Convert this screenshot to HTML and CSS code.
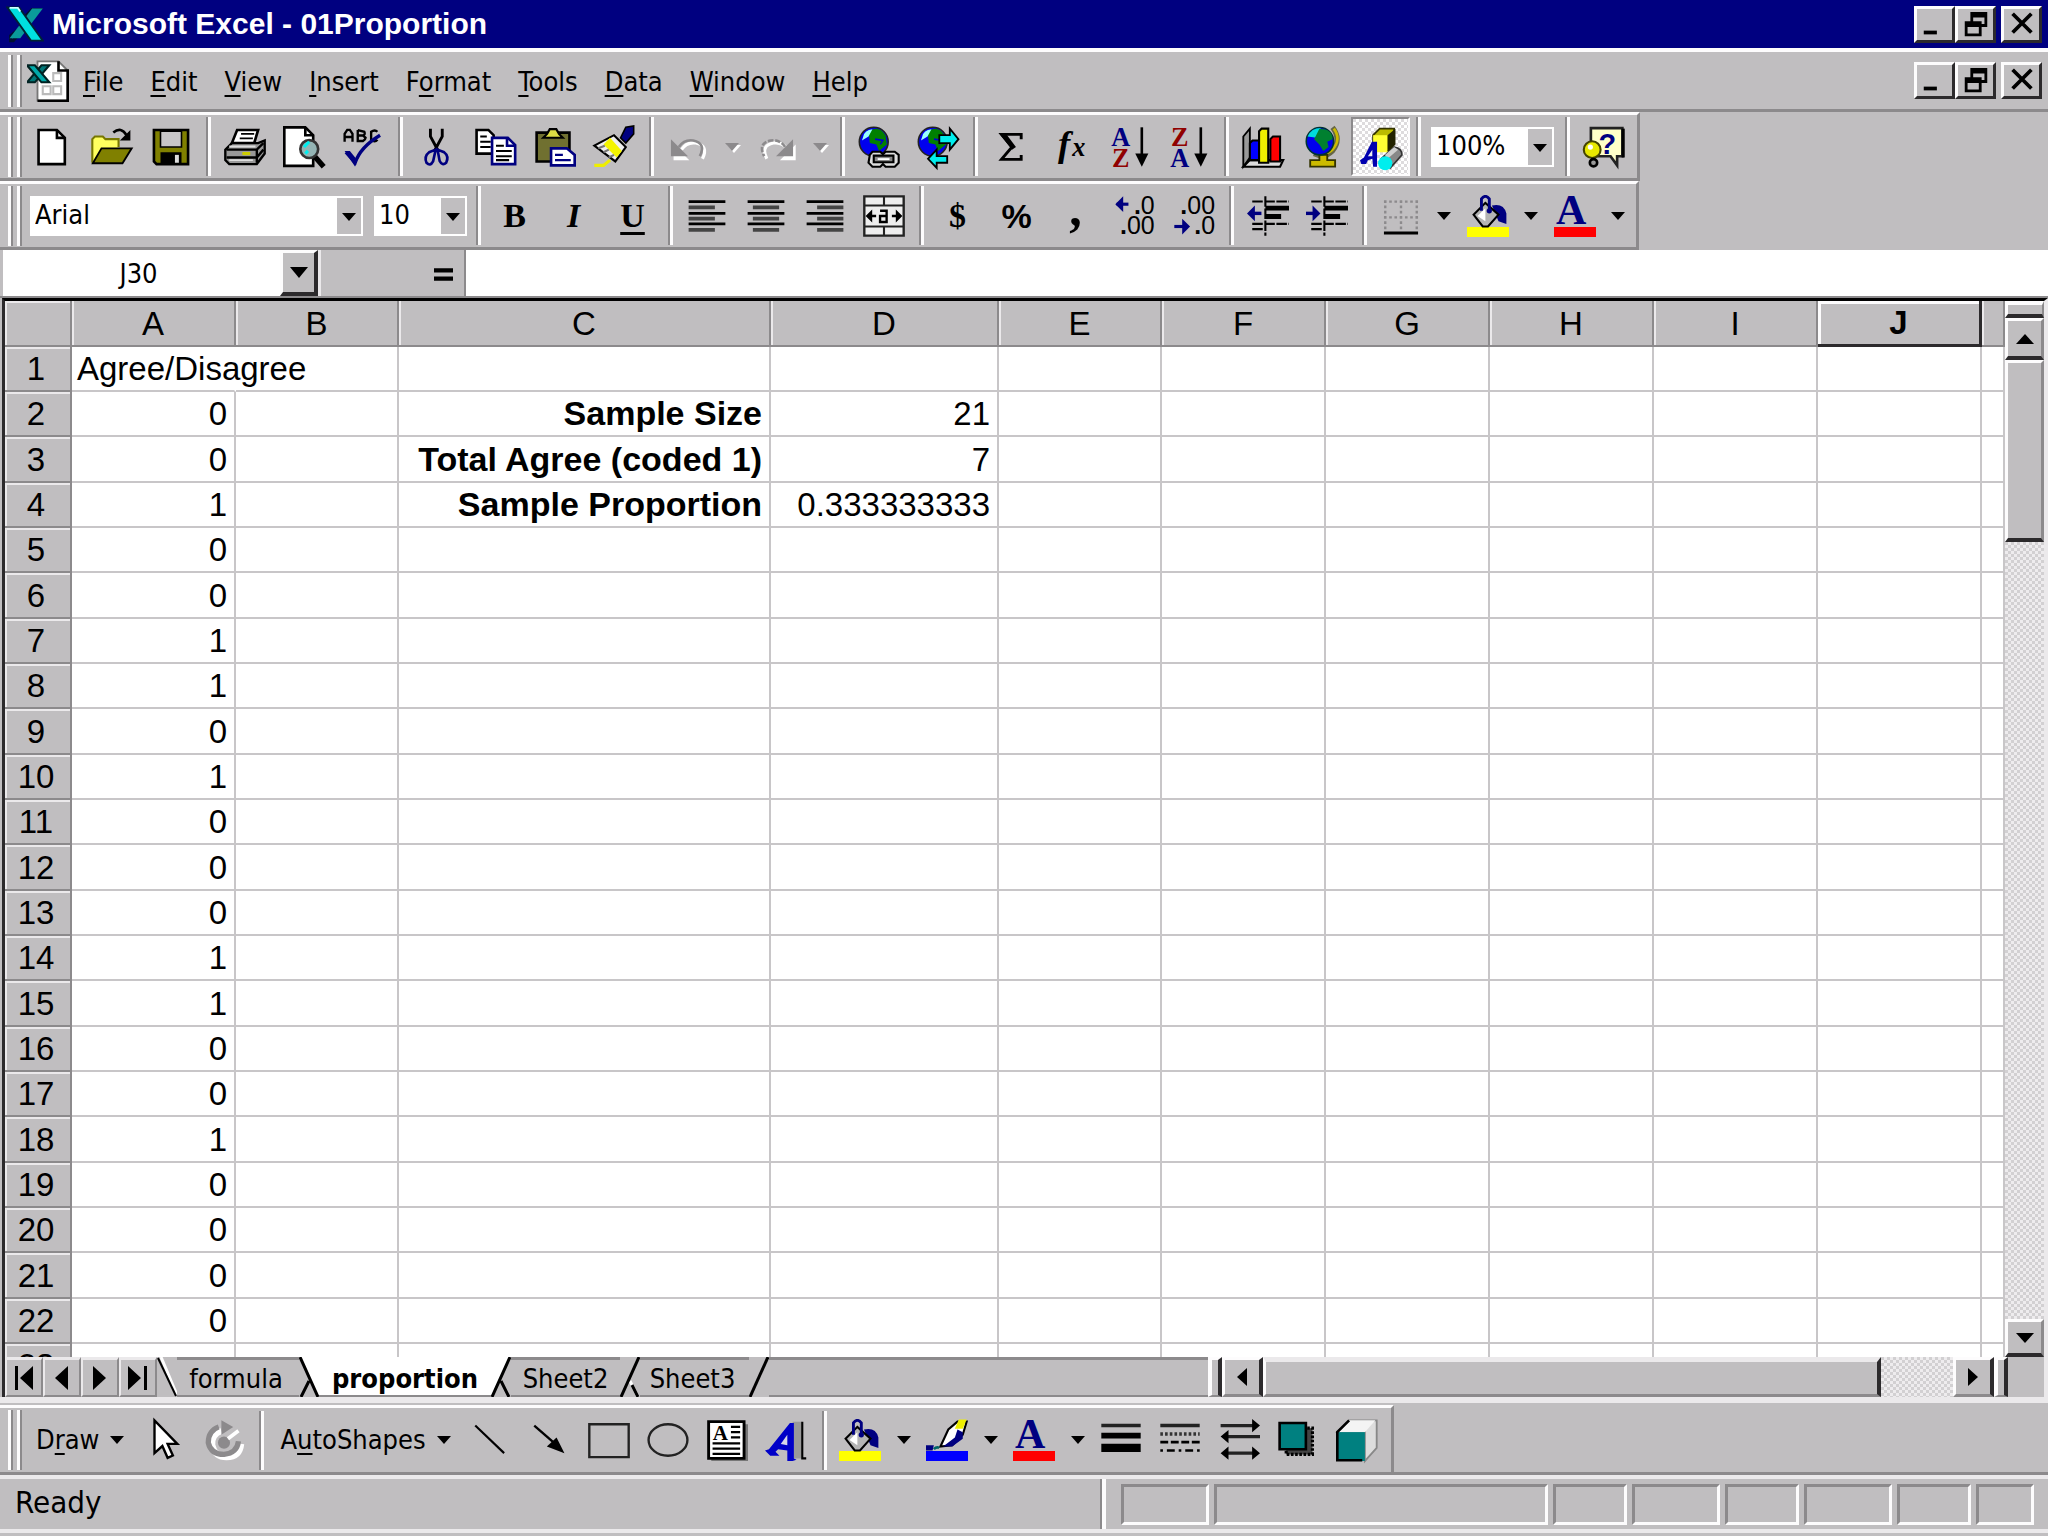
FILE: index.html
```html
<!DOCTYPE html>
<html lang="en">
<head>
<meta charset="utf-8">
<title>Microsoft Excel - 01Proportion</title>
<link rel="stylesheet" href="styles.css">
</head>
<body>
<svg class="defs" aria-hidden="true">
  <symbol id="i-min" viewBox="0 0 16 16"><path d="M2 11h7v2H2z"/></symbol>
  <symbol id="i-restore" viewBox="0 0 16 16"><path d="M5 1h9v8h-3V7.500h1.500V4h-6v2H5zM2 6h9v8H2zM3.500 9v3.500h6V9z" fill-rule="evenodd"/></symbol>
  <symbol id="i-close" viewBox="0 0 16 16"><path d="M3 2l10 10M13 2L3 12" fill="none" stroke="#000" stroke-width="2"/></symbol>
  <symbol id="i-bucket" viewBox="0 0 16 16">
    <path d="M0 12.200h16V16H0z" fill="var(--swatch)"/>
    <path d="M9.500 4q4.500-1 5.500 3v4l-3-1z" fill="#000080"/>
    <path d="M2.500 7.500L7 3l5 4.500L8 12H6z" fill="#b4b4b4" stroke="#000" stroke-width=".8"/>
    <path d="M4 8l3-3v5z" fill="#fff"/>
    <path d="M5.500 6V1.500Q7-.5 8.500 1.500V6" fill="none" stroke="#000080" stroke-width="1.100"/>
    <circle cx="8.500" cy="6" r="1" fill="#000080"/>
  </symbol>
  <symbol id="i-globe" viewBox="0 0 16 16">
    <circle cx="6" cy="6" r="5.500" fill="#0000ee" stroke="#222" stroke-width=".6"/>
    <path d="M4 2Q8-.5 10.500 3.500L11 7 8 9.500 7 7 4.500 6.500z" fill="#008000"/>
    <path d="M2 4Q2.500 1.500 5.500 1.200L4 4 1.500 5.500z" fill="#9ff"/>
    <path d="M6.500 5l3 .5-1 1.500" fill="none" stroke="#00c" stroke-width=".6"/>
  </symbol>
</svg>

<header class="titlebar">
  <svg class="app-icon" viewBox="0 0 16 16"><path d="M3 15L14 2h-3L7 6v3L2 13v2z" fill="#088" stroke="#001030" stroke-width="1.400"/><path d="M11 1.500h4.500L6 14H1.500z" fill="#0a9a9a"/><path d="M.5 1h5l10 14H10.500z" fill="#00e0e0" stroke="#023" stroke-width=".8"/><path d="M1.500 1.200H5l1 1.500" fill="none" stroke="#cff" stroke-width=".8"/></svg>
  <h1>Microsoft Excel - 01Proportion</h1>
  <div class="winbtns">
    <button aria-label="Minimize"><svg><use href="#i-min"/></svg></button><button aria-label="Restore"><svg><use href="#i-restore"/></svg></button><button class="close" aria-label="Close"><svg><use href="#i-close"/></svg></button>
  </div>
</header>

<nav class="menubar">
  <span class="grip"></span>
  <svg class="doc-icon" viewBox="0 0 16 16"><path d="M4 .5h8L15.500 4v11.500H4z" fill="#fff" stroke="#777" stroke-width=".7"/><path d="M12 .5V4h3.500v11.500H4" fill="none" stroke="#000" stroke-width="1"/><path d="M10 5h3v3h-3zM6 10h3v3H6zM10 10h3v3h-3z" fill="none" stroke="#bbb" stroke-width=".8"/><path d="M5.500 2H8.500L3 8.500H0z" fill="#077" stroke="#022" stroke-width=".8"/><path d="M0 2h3l5.500 6.500h-3z" fill="#0aa" stroke="#022" stroke-width=".8"/></svg>
  <button><u>F</u>ile</button><button><u>E</u>dit</button><button><u>V</u>iew</button><button><u>I</u>nsert</button><button>F<u>o</u>rmat</button><button><u>T</u>ools</button><button><u>D</u>ata</button><button><u>W</u>indow</button><button><u>H</u>elp</button>
  <div class="winbtns">
    <button aria-label="Minimize workbook"><svg><use href="#i-min"/></svg></button><button aria-label="Restore workbook"><svg><use href="#i-restore"/></svg></button><button class="close" aria-label="Close workbook"><svg><use href="#i-close"/></svg></button>
  </div>
</nav>

<div class="toolbar" role="toolbar" aria-label="Standard">
  <span class="grip"></span>
  <button class="tool" aria-label="New"><svg viewBox="0 0 16 16"><path d="M2.500 1.500h7l3 3v10h-10z" fill="#fff" stroke="#000"/><path d="M9.500 1.500v3h3" fill="none" stroke="#000"/></svg></button>
  <button class="tool" aria-label="Open"><svg viewBox="0 0 16 16"><path d="M.5 14V5l1-1h3l1 1h5v3" fill="#ffff60" stroke="#770" stroke-width=".8"/><path d="M.7 14.200L4 8.500h11.500l-3.500 5.700z" fill="#808000" stroke="#000" stroke-width=".7"/><path d="M8.500 2.500q3-2.500 5 1" fill="none" stroke="#000"/><path d="M15 1.500v4h-4z"/></svg></button>
  <button class="tool" aria-label="Save"><svg viewBox="0 0 16 16"><path d="M1.500 1.500h13v13h-12l-1-1z" fill="#808000" stroke="#000"/><path d="M4 2h8v6H4z" fill="#c8c6c8" stroke="#000" stroke-width=".6"/><path d="M4 10h8v4.500H4z"/><path d="M9.500 11h1.500v3H9.500z" fill="#ddd"/></svg></button>
  <span class="sep"></span>
  <button class="tool" aria-label="Print"><svg viewBox="0 0 16 16"><path d="M5 1.500h8l-1.500 5H3z" fill="#fff" stroke="#000"/><path d="M6.500 3h5M6 4.700h5" stroke="#000" stroke-width=".7"/><path d="M3 6.500h10l2.500-1v5l-3 4H2l-1.500-1.500V9z" fill="#999" stroke="#000" stroke-width=".9"/><path d="M1 9h11.500L15 6.500M1 12h11.500L15 9M12.500 9v5" fill="none" stroke="#000" stroke-width=".9"/><path d="M2 7.800h10M2 13h9" stroke="#ddd" stroke-width=".7"/><path d="M7 10.500h3" stroke="#cc0" stroke-width="1.200"/></svg></button>
  <button class="tool" aria-label="Print Preview"><svg viewBox="0 0 16 16"><path d="M.5.5h8l3 3v11.700H.5z" fill="#fff" stroke="#000"/><path d="M8.500.5v3h3" fill="none" stroke="#000"/><path d="M12 11.500l3.500 4" stroke="#000" stroke-width="2"/><circle cx="10" cy="8.800" r="3.400" fill="#94b4b4" stroke="#333"/><path d="M8 8l2-2M8.500 10.500l1-1" stroke="#0ee" stroke-width="1.200"/></svg></button>
  <button class="tool" aria-label="Spelling"><svg viewBox="0 0 16 16"><path d="M1 6V3l1-1.500h1L4 3v3M1 4.200h3M6 1.500v4.200h2q1-.6 1-1.200L8 3.600q1-.3.500-1.400L6 1.600M6 3.600h2M13.500 2.200q-1-1-2.400 0v3q1.400 1.200 2.400 0" fill="none" stroke="#000" stroke-width=".9"/><path d="M1.500 10l3.500 4q2-6 9.500-10.500" fill="none" stroke="#000080" stroke-width="1.300"/><path d="M1 9.500h2l2 2.500v3.500z" fill="#000080"/></svg></button>
  <span class="sep"></span>
  <button class="tool" aria-label="Cut"><svg viewBox="0 0 16 16"><path d="M5.500 1v3l3 5.500M10 1v3L7 9.500" fill="none" stroke="#000" stroke-width="1.100"/><path d="M7.500 9L5 10q-2 1.500-1 4 1.500 1.500 2.500-.5zM8.200 9l2.500 1q2 1.500.8 4-1.500 1.300-2.500-.7z" fill="none" stroke="#000080"/></svg></button>
  <button class="tool" aria-label="Copy"><svg viewBox="0 0 16 16"><path d="M.6 1.500h4.500l2 2v7H.6z" fill="#fff" stroke="#000"/><path d="M2 4h2.500M2 6h4M2 8h4" stroke="#000" stroke-width=".8"/><path d="M6.500 4.500h6l2.800 2.800v7.200H6.500z" fill="#fff" stroke="#000080"/><path d="M12.200 4.500v3h3" fill="none" stroke="#000080"/><path d="M8 7.500h3M8 9.500h6M8 11.500h6M8 13h5" stroke="#000" stroke-width=".8"/></svg></button>
  <button class="tool" aria-label="Paste"><svg viewBox="0 0 16 16"><path d="M1 2.500h12.500v11H1z" fill="#707030" stroke="#000"/><path d="M3.500 4.500h7.500L9.500 3 8.500 1.200H6L5 3z" fill="#dd4" stroke="#000" stroke-width=".8"/><path d="M6.500 8.500h6l3 2.500v4h-9z" fill="#fff" stroke="#000080"/><path d="M8 11h3M8 13h6" stroke="#000080" stroke-width=".8"/></svg></button>
  <button class="tool" aria-label="Format Painter"><svg viewBox="0 0 16 16"><path d="M10.500 4.500l2-4L15.500 0v3L12.500 6.500z" fill="#000080" stroke="#000" stroke-width=".6"/><path d="M8 3.500l4.500 4.500-4 5.500L.5 7.500z" fill="#eee" stroke="#000" stroke-width=".8"/><path d="M6.500 4.500l4.500 5-2 2.500-5-5z" fill="#f4f400"/><path d="M2 8.500l2.500-1M4 10l2-1M6 12l2-1" stroke="#777" stroke-width=".8"/><path d="M.5 15h3.500l2.500-2" fill="none" stroke="#ee0" stroke-width="1.200"/></svg></button>
  <span class="sep"></span>
  <button class="tool" aria-label="Undo" disabled><svg viewBox="0 0 16 16"><path d="M4.500 8q2-3 5.500-2.500 5 1 2.500 6" fill="none" stroke="#fff" stroke-width="1.200" transform="translate(1 1)"/><path d="M1.500 6v6h6z" fill="#fff" transform="translate(1 1)"/><path d="M4.500 8q2-3 5.500-2.500 5 1 2.500 6" fill="none" stroke="#8c8a8c" stroke-width="1"/><path d="M1.500 5v6.500H8z" fill="#8c8a8c"/></svg></button>
  <button class="drop" aria-label="Undo list" disabled></button>
  <button class="tool" aria-label="Redo" disabled><svg viewBox="0 0 16 16"><path d="M11.500 8q-2-3-5.500-2.500-5 1-2.500 6" fill="none" stroke="#fff" stroke-width="1.200" transform="translate(1 1)"/><path d="M14.500 6v6h-6z" fill="#fff" transform="translate(1 1)"/><path d="M11.500 8q-2-3-5.500-2.500-5 1-2.500 6" fill="none" stroke="#8c8a8c" stroke-width="1" stroke-dasharray="2 .7"/><path d="M14.500 5v6.500H8z" fill="#8c8a8c"/></svg></button>
  <button class="drop" aria-label="Redo list" disabled></button>
  <span class="sep"></span>
  <button class="tool" aria-label="Insert Hyperlink"><svg viewBox="0 0 16 16"><use href="#i-globe"/><path d="M4.500 11l1-1.200h3l1 1 1-1h3.500L15.500 11v3L14 15.500h-3.500l-1-1-1 1h-3L4 14z" fill="#ddd" stroke="#000" stroke-width=".8"/><path d="M6 11.300h7.500v2.500H6z" fill="#888" stroke="#000" stroke-width=".8"/><path d="M7.500 12.600H12" stroke="#fff" stroke-width=".7"/></svg></button>
  <button class="tool" aria-label="Web Toolbar"><svg viewBox="0 0 16 16"><use href="#i-globe"/><path d="M8.500 3.500h4V1l3.300 4-3.300 4V6.500h-4z" fill="#0ee" stroke="#000" stroke-width=".7"/><path d="M11.500 14h-4v2l-3.300-3.500L7.500 9v2.500h4z" fill="#0ee" stroke="#000" stroke-width=".7"/></svg></button>
  <span class="sep"></span>
  <button class="tool" aria-label="AutoSum"><svg viewBox="0 0 16 16"><path d="M11.500 5V3.200H4L8 8l-4 4.700h7.500V11" fill="none" stroke="#000" stroke-width="1.100"/><path d="M3 2.700h2.500L9.500 8 8 9z"/></svg></button>
  <button class="tool" aria-label="Paste Function"><svg viewBox="0 0 16 16"><text x="3" y="11.500" font-family="Liberation Serif, serif" font-size="14" font-weight="bold" font-style="italic">f</text><text x="8.500" y="11.500" font-family="Liberation Serif, serif" font-size="10" font-weight="bold" font-style="italic">x</text></svg></button>
  <button class="tool" aria-label="Sort Ascending"><svg viewBox="0 0 16 16"><g font-family="Liberation Serif, serif" font-size="10" font-weight="bold" text-anchor="middle"><text x="4.500" y="7.500" fill="#000080">A</text><text x="4.500" y="15.500" fill="#900000">Z</text></g><path d="M12.500.5V12" stroke="#000" stroke-width="1"/><path d="M10 10.500h5l-2.500 5z"/></svg></button>
  <button class="tool" aria-label="Sort Descending"><svg viewBox="0 0 16 16"><g font-family="Liberation Serif, serif" font-size="10" font-weight="bold" text-anchor="middle"><text x="4.500" y="7.500" fill="#900000">Z</text><text x="4.500" y="15.500" fill="#000080">A</text></g><path d="M12.500.5V12" stroke="#000" stroke-width="1"/><path d="M10 10.500h5l-2.500 5z"/></svg></button>
  <span class="sep"></span>
  <button class="tool" aria-label="Chart Wizard"><svg viewBox="0 0 16 16"><path d="M.5 15.500V4L3 1v11z" fill="#999" stroke="#000" stroke-width=".7"/><path d="M.5 15.500h14l1.200-2.500H3z" fill="#ddd" stroke="#000" stroke-width=".8"/><path d="M3 6.500l1-1h2.500V13H3z" fill="#00f" stroke="#000" stroke-width=".8"/><path d="M6.500 2l1-1h2.500v13H6.500z" fill="#ee0" stroke="#000" stroke-width=".8"/><path d="M10.800 5l1-1h2.700v9.500h-3.700z" fill="#f00" stroke="#000" stroke-width=".8"/></svg></button>
  <button class="tool" aria-label="Map"><svg viewBox="0 0 16 16"><path d="M12 .5q3.500 4.500 0 9-3 3-7 1" fill="none" stroke="#664" stroke-width="2"/><path d="M12.500 1q3 4-.5 8-3 2.500-6 1" fill="none" stroke="#cb0" stroke-width="1"/><path d="M7 11h3v2h3v2.500H3.500V13H7z" fill="#cb0" stroke="#330" stroke-width=".7"/><circle cx="7.200" cy="5.800" r="5.200" fill="#00e" stroke="#033" stroke-width=".6"/><path d="M2.500 4Q4 .8 7.500.8L6 4.500z" fill="#0dd"/><path d="M7 1q5 0 5 4l-2 1 .5 2-2 1.500L7 7 5 5z" fill="#008030"/></svg></button>
  <button class="tool pressed" aria-label="Drawing" aria-pressed="true"><svg viewBox="0 0 16 16"><path d="M5 3.500L7.500 1H13v6l-2 2.500H5z" fill="#bb0" stroke="#330" stroke-width=".7"/><path d="M5 3.500h5.500V10H5z" fill="#ff3"/><path d="M10.500 3.500L13.500 1v6l-3 2.500z" fill="#220"/><path d="M4.500 6h2v9.500H5l-.3-3-1.700.5-.7 1.500H.5L0 13l1.500-1z" fill="#0000b0"/><path d="M3 11.500l1.700-2.500v2.500z" fill="#eee"/><path d="M8 12.500l5-4.500q3 .5 3 3l-4.500 5z" fill="#888" stroke="#333" stroke-width=".6"/><path d="M9.500 11l3.500-3 1.500 1-4 3.500z" fill="#cfcfcf"/><circle cx="9.600" cy="14.200" r="2.700" fill="#0ee"/></svg></button>
  <span class="sep"></span>
  <span class="combo combo-zoom"><select aria-label="Zoom"><option>100%</option></select></span>
  <span class="sep sep-wide"></span>
  <button class="tool" aria-label="Office Assistant"><svg viewBox="0 0 16 16"><path d="M3 .8h12v10.700h-2V15l-2.500-3.500H3z" fill="#ffffc8" stroke="#222" stroke-width="1"/><path d="M15.300 1v11" stroke="#000" stroke-width="1.200"/><text x="9.300" y="10.500" font-family="Liberation Sans, sans-serif" font-size="11" font-weight="bold" text-anchor="middle" fill="#000080">?</text><circle cx="3.500" cy="9" r="3.200" fill="#e8e800" stroke="#440" stroke-width=".8"/><circle cx="2.800" cy="8" r="1" fill="#fff"/><circle cx="4" cy="14" r="1.400" fill="#999" stroke="#000"/></svg></button>
</div>

<div class="toolbar" role="toolbar" aria-label="Formatting">
  <span class="grip"></span>
  <span class="combo combo-font"><select aria-label="Font"><option>Arial</option></select></span>
  <span class="combo combo-size"><select aria-label="Font Size"><option>10</option></select></span>
  <span class="sep"></span>
  <button class="tool letter" aria-label="Bold"><b>B</b></button>
  <button class="tool letter" aria-label="Italic"><i>I</i></button>
  <button class="tool letter" aria-label="Underline"><u>U</u></button>
  <span class="sep"></span>
  <button class="tool" aria-label="Align Left"><svg viewBox="0 0 16 16"><path d="M1 2.500h14M1 7h14M1 11h14" stroke="#000" stroke-width="1"/><path d="M1 4.700h10M1 9h10M1 13.300h10" stroke="#444" stroke-width="1.400"/></svg></button>
  <button class="tool" aria-label="Center"><svg viewBox="0 0 16 16"><path d="M1 2.500h14M1 7h14M1 11h14" stroke="#000" stroke-width="1"/><path d="M3 4.700h10M3 9h10M3 13.300h10" stroke="#444" stroke-width="1.400"/></svg></button>
  <button class="tool" aria-label="Align Right"><svg viewBox="0 0 16 16"><path d="M1 2.500h14M1 7h14M1 11h14" stroke="#000" stroke-width="1"/><path d="M5 4.700h10M5 9h10M5 13.300h10" stroke="#444" stroke-width="1.400"/></svg></button>
  <button class="tool" aria-label="Merge and Center"><svg viewBox="0 0 16 16"><path d="M.5.5h15v15H.5z" fill="#eee" stroke="#222" stroke-width=".9"/><path d="M.5 4h15M.5 12h15M8 .5V4M8 12v3.500" stroke="#222" stroke-width=".8"/><path d="M3.500 5.500v5L1 8zM12.500 5.500v5L15 8z"/><path d="M3 8h2M11 8h2" stroke="#000"/><path d="M6.500 6H9v4.300H6.500V8H9" fill="none" stroke="#000" stroke-width=".9"/></svg></button>
  <span class="sep"></span>
  <button class="tool letter" aria-label="Currency Style"><b>$</b></button>
  <button class="tool percent" aria-label="Percent Style">%</button>
  <button class="tool letter comma" aria-label="Comma Style"><b>,</b></button>
  <button class="tool" aria-label="Increase Decimal"><svg viewBox="0 0 16 16"><path d="M1 3.500h4.500" stroke="#000080" stroke-width="1.200"/><path d="M.5 3.500L3.500.5v6z" fill="#000080"/><g font-family="Liberation Sans, sans-serif" font-size="9.500" text-anchor="end"><text x="15.500" y="7.200"><tspan font-weight="bold">.</tspan>0</text><text x="15.500" y="15"><tspan font-weight="bold">.</tspan>00</text></g></svg></button>
  <button class="tool" aria-label="Decrease Decimal"><svg viewBox="0 0 16 16"><path d="M.5 12h4.500" stroke="#000080" stroke-width="1.200"/><path d="M6.500 12l-3-3v6z" fill="#000080"/><g font-family="Liberation Sans, sans-serif" font-size="9.500" text-anchor="end"><text x="16" y="7.200"><tspan font-weight="bold">.</tspan>00</text><text x="16" y="15"><tspan font-weight="bold">.</tspan>0</text></g></svg></button>
  <span class="sep"></span>
  <button class="tool" aria-label="Decrease Indent"><svg viewBox="0 0 16 16"><path d="M2 2.500h14M2 11h14M2 13h4M7 .5v15" stroke="#000" stroke-width=".8" stroke-dasharray="4 .6"/><path d="M7 5h9M7 8.200h6" stroke="#000" stroke-width="1.900"/><path d="M1 7h4.500" stroke="#000080" stroke-width="1.300"/><path d="M0 7l3-3v6z" fill="#000080"/></svg></button>
  <button class="tool" aria-label="Increase Indent"><svg viewBox="0 0 16 16"><path d="M2 2.500h14M2 11h14M2 13h4M7 .5v15" stroke="#000" stroke-width=".8" stroke-dasharray="4 .6"/><path d="M7 5h9M7 8.200h6" stroke="#000" stroke-width="1.900"/><path d="M0 7h4" stroke="#000080" stroke-width="1.300"/><path d="M5.500 7l-3-3v6z" fill="#000080"/></svg></button>
  <span class="sep"></span>
  <button class="tool" aria-label="Borders"><svg viewBox="0 0 16 16"><path d="M1.500 2.500h13M1.500 8.500h13M2 2v12M8 2v12M14 2v12" fill="none" stroke="#8c8a8c" stroke-width=".9" stroke-dasharray="1 1"/><path d="M1.500 14.500h13" stroke="#000" stroke-width="1.100"/></svg></button>
  <button class="drop" aria-label="Borders list"></button>
  <button class="tool yellow" aria-label="Fill Color"><svg><use href="#i-bucket"/></svg></button>
  <button class="drop" aria-label="Fill Color list"></button>
  <button class="tool" aria-label="Font Color"><svg viewBox="0 0 16 16"><path d="M0 12.200h16V16H0z" fill="#f00"/><text x="6.500" y="11.200" font-family="Liberation Serif, serif" font-size="16" font-weight="bold" text-anchor="middle" fill="#000080">A</text></svg></button>
  <button class="drop" aria-label="Font Color list"></button>
</div>

<div class="formulabar">
  <input class="namebox" aria-label="Name Box" value="J30">
  <button class="namedrop" aria-label="Name list"></button>
  <button class="equals" aria-label="Edit Formula"><svg viewBox="0 0 18 14"><path d="M0 1h18v4H0zM0 9h18v4H0z"/></svg></button>
  <input class="formula" aria-label="Formula">
</div>

<main class="book">
  <div class="sheet">
    <table>
      <colgroup><col class="c-head"><col class="c-std"><col class="c-b"><col class="c-c"><col class="c-d"><col class="c-b"><col class="c-std"><col class="c-std"><col class="c-std"><col class="c-std"><col class="c-std"><col></colgroup>
      <thead><tr><td></td><th>A</th><th>B</th><th>C</th><th>D</th><th>E</th><th>F</th><th>G</th><th>H</th><th>I</th><th class="current">J</th><th></th></tr></thead>
      <tbody>
        <tr><th>1<td class="spill">Agree/Disagree<td><td><td><td><td><td><td><td><td><td>
        <tr><th>2<td>0<td><td class="label">Sample Size<td>21<td><td><td><td><td><td><td>
        <tr><th>3<td>0<td><td class="label">Total Agree (coded 1)<td>7<td><td><td><td><td><td><td>
        <tr><th>4<td>1<td><td class="label">Sample Proportion<td>0.333333333<td><td><td><td><td><td><td>
        <tr><th>5<td>0<td><td><td><td><td><td><td><td><td><td>
        <tr><th>6<td>0<td><td><td><td><td><td><td><td><td><td>
        <tr><th>7<td>1<td><td><td><td><td><td><td><td><td><td>
        <tr><th>8<td>1<td><td><td><td><td><td><td><td><td><td>
        <tr><th>9<td>0<td><td><td><td><td><td><td><td><td><td>
        <tr><th>10<td>1<td><td><td><td><td><td><td><td><td><td>
        <tr><th>11<td>0<td><td><td><td><td><td><td><td><td><td>
        <tr><th>12<td>0<td><td><td><td><td><td><td><td><td><td>
        <tr><th>13<td>0<td><td><td><td><td><td><td><td><td><td>
        <tr><th>14<td>1<td><td><td><td><td><td><td><td><td><td>
        <tr><th>15<td>1<td><td><td><td><td><td><td><td><td><td>
        <tr><th>16<td>0<td><td><td><td><td><td><td><td><td><td>
        <tr><th>17<td>0<td><td><td><td><td><td><td><td><td><td>
        <tr><th>18<td>1<td><td><td><td><td><td><td><td><td><td>
        <tr><th>19<td>0<td><td><td><td><td><td><td><td><td><td>
        <tr><th>20<td>0<td><td><td><td><td><td><td><td><td><td>
        <tr><th>21<td>0<td><td><td><td><td><td><td><td><td><td>
        <tr><th>22<td>0<td><td><td><td><td><td><td><td><td><td>
        <tr><th>23<td><td><td><td><td><td><td><td><td><td><td>
      </tbody>
    </table>
  </div>
  <div class="vscroll">
    <span class="vsplit"></span>
    <button aria-label="Scroll up"><svg viewBox="0 0 20 12"><path d="M10 1l9 10H1z"/></svg></button>
    <span class="vthumb"></span>
    <span class="vtrack"></span>
    <button aria-label="Scroll down"><svg viewBox="0 0 20 12"><path d="M10 11L1 1h18z"/></svg></button>
  </div>
  <div class="tabstrip">
    <button class="navbtn" aria-label="First sheet"><svg viewBox="0 0 20 24"><path d="M1 0h3v24H1zM19 0v24L6 12z"/></svg></button>
    <button class="navbtn" aria-label="Previous sheet"><svg viewBox="0 0 20 24"><path d="M16 0v24L3 12z"/></svg></button>
    <button class="navbtn" aria-label="Next sheet"><svg viewBox="0 0 20 24"><path d="M3 0v24l13-12z"/></svg></button>
    <button class="navbtn" aria-label="Last sheet"><svg viewBox="0 0 20 24"><path d="M0 0v24l13-12zM16 0h3v24h-3z"/></svg></button>
    <svg class="slant" viewBox="0 0 20 40"><path d="M4 0l16 38" stroke="#fff" stroke-width="3"/><path d="M1 1l18 38" stroke="#000" stroke-width="2"/></svg>
    <button class="tab">formula</button>
    <svg class="slant" viewBox="0 0 20 40"><path d="M0 0h20v40z" fill="#fff"/><path d="M1 0l18 40M10 24L2 40" stroke="#000" stroke-width="3"/></svg>
    <button class="tab active">proportion</button>
    <svg class="slant" viewBox="0 0 20 40"><path d="M20 0H0v40z" fill="#fff"/><path d="M19 0L1 40M10 24l8 16" stroke="#000" stroke-width="3"/></svg>
    <button class="tab">Sheet2</button>
    <svg class="slant" viewBox="0 0 20 40"><path d="M10 24l8 16" stroke="#fff" stroke-width="3"/><path d="M19 0L1 40M12 28l6 12" stroke="#000" stroke-width="3"/></svg>
    <button class="tab">Sheet3</button>
    <svg class="slant" viewBox="0 0 20 40"><path d="M19 0L1 40" stroke="#000" stroke-width="3"/></svg>
    <span class="tabfill"></span>
    <div class="hscroll">
      <span class="hsplit"></span>
      <button aria-label="Scroll left"><svg viewBox="0 0 12 20"><path d="M1 10L11 1v18z"/></svg></button>
      <span class="hthumb"></span>
      <span class="htrack"></span>
      <button aria-label="Scroll right"><svg viewBox="0 0 12 20"><path d="M11 10L1 1v18z"/></svg></button>
      <span class="hsplit"></span>
    </div>
    <span class="corner"></span>
  </div>
</main>

<div class="dock">
<div class="toolbar drawing" role="toolbar" aria-label="Drawing">
  <span class="grip"></span>
  <button class="textdrop"><span>D<u>r</u>aw</span><span class="arrow"></span></button>
  <button class="tool" aria-label="Select Objects"><svg viewBox="0 0 16 16"><path d="M4 .5V13l3-2.700 2 4.500 2-.9-2-4.400h3.700z" fill="#fff" stroke="#000" stroke-width=".9"/></svg></button>
  <button class="tool" aria-label="Free Rotate"><svg viewBox="0 0 16 16"><path d="M6 3.500Q2 5 2.500 9q1 4.500 5.500 4.500 5 0 5.500-5" fill="none" stroke="#fff" stroke-width="2.400" transform="translate(1 1)"/><path d="M6 3Q2 4.500 2 9q1 4.500 6 4.500 5-.500 5.500-5" fill="none" stroke="#8c8a8c" stroke-width="2"/><path d="M7 .5L11.500 3 7 6z" fill="#8c8a8c"/><circle cx="8" cy="9" r="2.300" fill="#8c8a8c"/><path d="M9.500 7.500l4-3" stroke="#fff" stroke-width="1.400"/></svg></button>
  <span class="sep"></span>
  <button class="textdrop autoshapes"><span>A<u>u</u>toShapes</span><span class="arrow"></span></button>
  <button class="tool" aria-label="Line"><svg viewBox="0 0 16 16"><path d="M2 2.500L13 13" stroke="#000" stroke-width=".8"/></svg></button>
  <button class="tool" aria-label="Arrow"><svg viewBox="0 0 16 16"><path d="M2 2.500L10 9.500" stroke="#000" stroke-width=".9"/><path d="M13.500 13L6.800 10.500 10.500 7z"/></svg></button>
  <button class="tool" aria-label="Rectangle"><svg viewBox="0 0 16 16"><path d="M.5 2h15v12.500H.5z" fill="none" stroke="#222" stroke-width=".9"/></svg></button>
  <button class="tool" aria-label="Oval"><svg viewBox="0 0 16 16"><ellipse cx="8" cy="8" rx="7.400" ry="6" fill="none" stroke="#222" stroke-width=".9"/></svg></button>
  <button class="tool" aria-label="Text Box"><svg viewBox="0 0 16 16"><path d="M2 2h14v14H2z" fill="#777"/><path d="M1 1h13.500v14H1z" fill="#fff" stroke="#000" stroke-width="1.100"/><text x="5.500" y="8" font-family="Liberation Serif, serif" font-size="8" font-weight="bold" text-anchor="middle">A</text><path d="M9.500 3h3.500M9.500 5h3.500M9.500 7h3.500M2.500 9.300H13M2.500 11.300H13M2.500 13.300H13" stroke="#000" stroke-width=".8"/></svg></button>
  <button class="tool" aria-label="WordArt"><svg viewBox="0 0 16 16"><path d="M10.500 1H14v14h-3z" fill="#999"/><path d="M14.200 1v14h1.500" fill="none" stroke="#000" stroke-width=".8"/><path d="M9.500 1.500h1.500V15l1 .5-1.500.5H8.500v-4L5 11.500l-1 1L5.500 14H2L0 12l1.500-.5z" fill="#0000c8"/><path d="M6 9.500L8.500 6v4z" fill="#d8d8e8"/></svg></button>
  <span class="sep"></span>
  <button class="tool yellow" aria-label="Fill Color"><svg><use href="#i-bucket"/></svg></button>
  <button class="drop" aria-label="Fill Color list"></button>
  <button class="tool" aria-label="Line Color"><svg viewBox="0 0 16 16"><path d="M0 12.200h16V16H0z" fill="#00f"/><path d="M5.500 10.500L8.500 4l3.500-3h3.500L14 6l-4 4z" fill="#fff" stroke="#000" stroke-width=".8"/><path d="M14 5v2.500l-4 3H6.500L11 7l1-3z" fill="#000080"/><path d="M12.500.2h3L14 3.700h-3z" fill="#ee0"/><path d="M0 10h3l-.5 2H0z" fill="#000080"/><path d="M3 11.500q1-1 2-.5" fill="none" stroke="#066" stroke-width="1"/></svg></button>
  <button class="drop" aria-label="Line Color list"></button>
  <button class="tool" aria-label="Font Color"><svg viewBox="0 0 16 16"><path d="M0 12.200h16V16H0z" fill="#f00"/><text x="6.500" y="11.200" font-family="Liberation Serif, serif" font-size="16" font-weight="bold" text-anchor="middle" fill="#000080">A</text></svg></button>
  <button class="drop" aria-label="Font Color list"></button>
  <button class="tool" aria-label="Line Style"><svg viewBox="0 0 16 16"><path d="M.5 2.500h15" stroke="#222" stroke-width="1.300"/><path d="M.5 6.300h15" stroke="#000" stroke-width="2.200"/><path d="M.5 11h15" stroke="#000" stroke-width="3.200"/></svg></button>
  <button class="tool" aria-label="Dash Style"><svg viewBox="0 0 16 16"><path d="M.5 2.500h15" stroke="#222" stroke-width="1.300"/><path d="M.5 5.700h15" stroke="#333" stroke-width="1.300" stroke-dasharray="1 .8"/><path d="M.5 8.800h15" stroke="#000" stroke-width="1" stroke-dasharray="3 1"/><path d="M.5 12h15" stroke="#000" stroke-width="1" stroke-dasharray="1 1.500 3 1.500"/></svg></button>
  <button class="tool" aria-label="Arrow Style"><svg viewBox="0 0 16 16"><path d="M1 2.500h13M3 6.700h13M3 13h11" stroke="#222" stroke-width="1.200"/><path d="M13 0l3 2.500-3 2.500zM4 4.200L1 6.700l3 2.500zM13 10.500l3 2.500-3 2.500zM4 10.500L1 13l3 2.500z"/></svg></button>
  <button class="tool" aria-label="Shadow"><svg viewBox="0 0 16 16"><path d="M3.500 3.500h10v10h-10z" fill="#444" stroke="#000" stroke-width="1.200" stroke-dasharray="1 .6"/><path d="M1 1.500h10v10H1z" fill="#008080" stroke="#000"/></svg></button>
  <button class="tool" aria-label="3-D"><svg viewBox="0 0 16 16"><path d="M.5 5L5 .5h10.500V11l-4.500 5V5z" fill="#ddd" stroke="#888" stroke-width=".7"/><path d="M.5 5L5 .5h10L11 5z" fill="#f4f4f4"/><path d="M.5 5h10.500v11H.5z" fill="#008080"/><path d="M5 .5L.5 5v10.700H10" fill="none" stroke="#000" stroke-width="1"/></svg></button>
</div>
</div>

<footer class="statusbar">
  <span class="ready">Ready</span>
  <span class="pane p88"></span><span class="pane pwide"></span><span class="pane p74"></span><span class="pane p88"></span><span class="pane p74"></span><span class="pane p88"></span><span class="pane p74"></span><span class="pane p58"></span>
</footer>
</body>
</html>
```
FILE: styles.css
```css
:root {
  --face: #c0bec0;
  --light: #fdfcfd;
  --soft: #ebe9eb;
  --shade: #8c8a8c;
  --dark: #2c2a2c;
  --navy: #000080;
  --ui: "DejaVu Sans Condensed", "DejaVu Sans", sans-serif;
  --cell: "Liberation Sans", Arial, sans-serif;
}

* { box-sizing: border-box; }

body {
  margin: 0;
  height: 100vh;
  display: flex;
  flex-direction: column;
  overflow: hidden;
  background: var(--face);
  color: #000;
  font: 27px/32px var(--ui);
}

button {
  margin: 0;
  padding: 0;
  border: 0;
  background: none;
  color: inherit;
  font: inherit;
  flex: none;
}

u {
  text-decoration: underline;
  text-decoration-thickness: 2px;
  text-underline-offset: 4px;
}

.defs { position: absolute; width: 0; height: 0; }

/* title bar and menu */
.titlebar {
  display: flex;
  align-items: center;
  flex: none;
  height: 48px;
  padding: 0 6px;
  background: var(--navy);
  color: #fff;
}
.app-icon { width: 38px; height: 38px; }
.titlebar h1 {
  margin: 0 0 0 8px;
  font: bold 30px/46px var(--cell);
}
.winbtns { display: flex; margin-left: auto; }
.winbtns button {
  width: 41px;
  height: 37px;
  background: var(--face);
  border: 3px solid;
  border-color: var(--light) var(--dark) var(--dark) var(--light);
}
.winbtns .close { margin-left: 5px; }
.winbtns svg { display: block; width: 32px; height: 30px; margin: 1px auto 0; }

.menubar {
  display: flex;
  align-items: center;
  flex: none;
  height: 64px;
  padding: 0 6px;
  border-top: 4px solid var(--light);
  border-bottom: 3px solid var(--shade);
}
.menubar > button { padding: 2px 13px 0 14px; }
.menubar .doc-icon { width: 42px; height: 42px; margin: 0 0 0 5px; }

/* toolbars */
.grip {
  flex: none;
  width: 14px;
  height: 52px;
  border: 0 solid var(--shade);
  border-right-width: 2px;
  background: linear-gradient(90deg, var(--light) 0 3px, var(--shade) 3px 5px, transparent 5px 9px, var(--light) 9px);
}
.menubar .grip { margin-left: 2px; }
.toolbar {
  display: flex;
  align-items: center;
  align-self: flex-start;
  flex: none;
  height: 69px;
  padding: 0 4px 0 8px;
  border: solid var(--shade);
  border-width: 3px 3px 3px 0;
  border-top-color: var(--light);
}
.toolbar .grip { height: 60px; margin-right: 1px; }
.tool {
  width: 59px;
  height: 59px;
  display: flex;
  align-items: center;
  justify-content: center;
}
.tool svg { width: 42px; height: 42px; overflow: visible; }
.pressed {
  border: 2px solid;
  border-color: var(--shade) var(--light) var(--light) var(--shade);
  background: repeating-conic-gradient(#fff 0 25%, #dddbdd 0 50%) 0 0 / 6px 6px;
}
.yellow { --swatch: #ff0; }
.sep {
  flex: none;
  width: 15px;
  height: 59px;
  background: linear-gradient(90deg, transparent 6px, var(--shade) 6px 8px, var(--light) 8px 11px, transparent 11px);
}
.sep-wide { margin: 0 0 0 5px; }
.drop { width: 28px; height: 59px; display: flex; align-items: center; justify-content: center; }
.drop::before, .arrow {
  content: "";
  border: solid transparent;
  border-width: 8px 7px 0;
  border-top-color: #000;
}
.drop:disabled { width: 29px; }
.drop:disabled::before { border-top-color: var(--shade); filter: drop-shadow(2px 2px 0 #fff); }

.letter { font: bold 34px/40px "Liberation Serif", "Times New Roman", serif; }
.letter u { text-underline-offset: 5px; text-decoration-thickness: 3px; }
.comma { font-size: 50px; padding-bottom: 16px; }
.percent { font: bold 34px/40px var(--cell); }

.combo { position: relative; display: block; flex: none; height: 40px; background: #fff; }
.combo::before {
  content: "";
  position: absolute;
  top: 2px;
  right: 2px;
  bottom: 2px;
  width: 24px;
  background: var(--face);
  pointer-events: none;
}
.combo::after {
  content: "";
  position: absolute;
  top: 17px;
  right: 7px;
  border: solid transparent;
  border-width: 8px 7px 0;
  border-top-color: #000;
  pointer-events: none;
}
.combo select {
  appearance: none;
  width: 100%;
  height: 100%;
  padding: 0 28px 2px 5px;
  border: 0;
  background: none;
  color: #000;
  font: 27px/36px var(--ui);
}
.combo-zoom { width: 123px; margin-left: 6px; }
.combo-font { width: 333px; margin: 0 11px 0 7px; }
.combo-size { width: 93px; margin-right: 3px; }

/* formula bar */
.formulabar {
  display: flex;
  align-items: stretch;
  flex: none;
  height: 48px;
  padding-left: 3px;
  border-bottom: 2px solid var(--shade);
}
.formulabar input { border: 0; border-radius: 0; font: 27px/40px var(--ui); background: #fff; }
.namebox { width: 277px; flex: none; padding: 2px 6px 0 0; text-align: center; }
.namedrop {
  width: 38px;
  display: flex;
  align-items: center;
  justify-content: center;
  border: solid;
  border-width: 3px 4px 4px 3px;
  border-color: var(--light) var(--dark) var(--dark) var(--light);
}
.namedrop::before {
  content: "";
  border: solid transparent;
  border-width: 11px 9px 0;
  border-top-color: #000;
}
.equals { width: 148px; padding-right: 11px; text-align: right; border-left: 3px solid var(--soft); border-right: 2px solid var(--shade); }
.equals svg { width: 19px; height: 15px; }
.formula { flex: 1; min-width: 0; padding: 0 6px; }

/* workbook */
.book {
  flex: 1;
  min-height: 0;
  display: grid;
  grid-template-columns: minmax(0, 1fr) 39px;
  grid-template-rows: minmax(0, 1fr) 40px;
  margin-left: 2px;
  border-left: 3px solid var(--dark);
  border-top: 3px solid #000;
  border-right: 4px solid var(--soft);
}
.sheet { overflow: hidden; background: #fff; }
table {
  width: 100%;
  table-layout: fixed;
  border-collapse: separate;
  border-spacing: 0;
  font: 33px/43px var(--cell);
}
.c-head { width: 67px; }
.c-std { width: 164px; }
.c-b { width: 163px; }
.c-c { width: 372px; }
.c-d { width: 228px; }
th, td { padding: 0; height: 45px; font-weight: normal; white-space: nowrap; }
thead th, thead td {
  height: 46px;
  background: var(--face);
  border: solid var(--shade);
  border-width: 0 2px 2px 0;
  box-shadow: inset 2px 0 var(--soft);
}
thead td { box-shadow: inset 2px 2px var(--soft); }
thead .current {
  font-weight: bold;
  border-color: var(--dark);
  border-width: 0 3px 3px 0;
  box-shadow: inset 3px 3px var(--light);
}
tbody th {
  background: var(--face);
  border: solid var(--shade);
  border-width: 0 2px 2px 0;
  box-shadow: inset 2px 2px var(--soft);
  padding-right: 3px;
}
tbody td {
  padding: 0 7px;
  text-align: right;
  border: solid #c8c6c8;
  border-width: 0 2px 2px 0;
}
tbody tr:nth-child(3n) > * { height: 46px; }
tbody .spill { padding: 0 0 0 5px; text-align: left; border-right-color: transparent; overflow: visible; }
tbody .label { font-size: 34px; font-weight: bold; }

.vscroll { display: flex; flex-direction: column; background: var(--face); }
.vsplit { height: 17px; border: solid; border-width: 4px 2px 4px 3px; border-color: var(--light) var(--shade) var(--dark) var(--light); }
.vscroll button {
  height: 42px;
  display: flex;
  align-items: center;
  justify-content: center;
  border: solid;
  border-width: 3px 3px 4px 3px;
  border-color: var(--light) var(--shade) var(--dark) var(--light);
}
.vscroll button:last-child { height: 38px; }
.vscroll svg { width: 20px; height: 12px; }
.vthumb { height: 182px; border: solid; border-width: 3px 3px 4px 3px; border-color: var(--light) var(--shade) var(--dark) var(--light); }
.vtrack, .htrack { flex: 1; background: repeating-conic-gradient(#eeecee 0 25%, #d2d0d2 0 50%) 0 0 / 6px 6px; }

.tabstrip { grid-column: 1 / -1; display: flex; min-width: 0; }
.navbtn {
  width: 38px;
  display: flex;
  align-items: center;
  justify-content: center;
  border: solid;
  border-width: 3px 2px 2px;
  border-color: var(--soft) var(--shade) var(--shade) var(--soft);
}
.navbtn svg { width: 20px; height: 24px; }
.slant { flex: none; width: 20px; height: 40px; }
.tab {
  width: 109px;
  padding-top: 2px;
  border: solid var(--shade);
  border-width: 3px 0 2px;
}
.tab:nth-of-type(5) { width: 122px; padding-right: 4px; }
.tab.active { width: 172px; background: #fff; border-top-color: #fff; font-weight: bold; }
.tab:last-of-type { padding-right: 4px; }
.tabfill { flex: 1; border-top: 3px solid var(--shade); border-bottom: 2px solid var(--shade); }
.hscroll { flex: none; width: 800px; display: flex; }
.hsplit { flex: none; width: 14px; border: solid; border-width: 3px 4px 2px 4px; border-color: var(--light) var(--dark) var(--shade) var(--light); }
.hscroll button {
  width: 41px;
  border: solid;
  border-width: 3px 4px 3px 3px;
  border-color: var(--light) var(--dark) var(--shade) var(--light);
  display: flex;
  align-items: center;
  justify-content: center;
}
.hscroll svg { width: 12px; height: 20px; }
.hthumb { flex: none; width: 618px; border: solid; border-width: 5px 4px 3px 3px; border-color: var(--soft) var(--dark) var(--shade) var(--light); }
.corner { flex: none; width: 36px; background: var(--face); }

/* drawing toolbar and status bar */
.dock { flex: none; display: flex; padding-top: 2px; border-top: 6px solid var(--soft); border-bottom: 3px solid var(--shade); }
.drawing { height: 67px; border-bottom: 0; }
.textdrop { display: flex; align-items: center; gap: 11px; padding: 0 11px 0 13px; }
.autoshapes { padding-left: 12px; }

.statusbar {
  flex: none;
  display: flex;
  align-items: center;
  gap: 5px;
  height: 58px;
  margin-bottom: 3px;
  padding-right: 14px;
  border-top: 4px solid var(--soft);
  border-bottom: 4px solid var(--soft);
}
.ready {
  flex: 1;
  align-self: stretch;
  margin-right: 10px;
  padding: 7px 0 0 15px;
  border-right: 4px solid var(--light);
  box-shadow: inset -2px 0 var(--shade);
  font-size: 31px;
}
.pane {
  flex: none;
  height: 41px;
  border: 3px solid;
  border-color: var(--shade) var(--light) var(--light) var(--shade);
}
.p58 { width: 58px; }
.p74 { width: 74px; }
.p88 { width: 88px; }
.pwide { width: 334px; }
```
